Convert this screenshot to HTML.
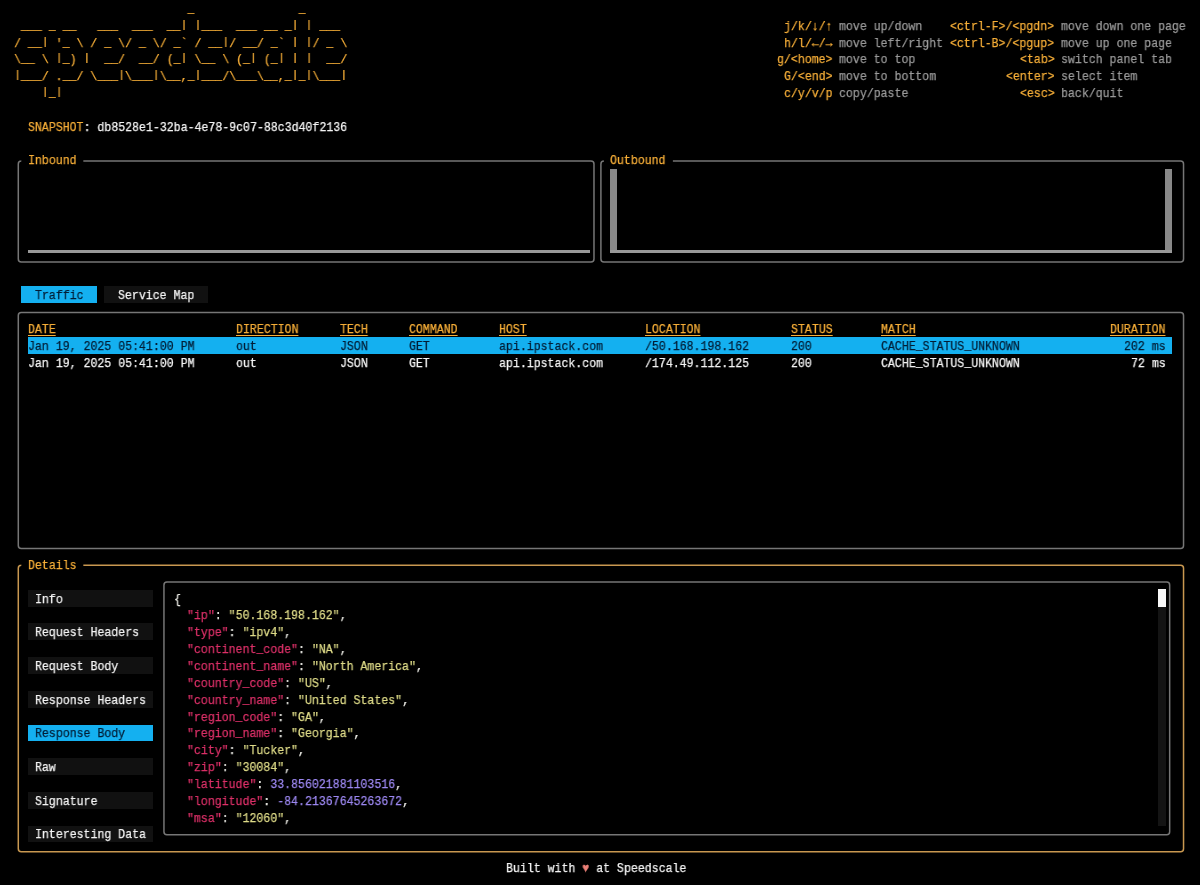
<!DOCTYPE html>
<html><head><meta charset="utf-8"><style>
html,body{margin:0;padding:0;background:#000;width:1200px;height:885px;overflow:hidden;}
.t{position:absolute;white-space:pre;font-family:"Liberation Mono",monospace;font-size:13.0px;line-height:16.85px;height:16.85px;transform-origin:0 0;transform:scaleX(0.88923);will-change:transform;-webkit-text-stroke:0.25px currentColor;}
.u{position:relative;top:-1.2px;}
.p{display:inline-block;transform-origin:0 2px;transform:scaleY(0.8);}
svg{position:absolute;left:0;top:0;}
</style></head><body>
<div class="t" style="left:13.97px;top:1.80px;"><span style="color:#f6ae38;">                         <span class="u">_</span>               <span class="u">_</span>      </span></div>
<div class="t" style="left:13.97px;top:18.65px;"><span style="color:#f6ae38;"> <span class="u">___</span> <span class="u">_</span> <span class="u">__</span>   <span class="u">___</span>  <span class="u">___</span>  <span class="u">__</span><span class="p">|</span> <span class="p">|</span><span class="u">___</span>  <span class="u">___</span> <span class="u">__</span> <span class="u">_</span><span class="p">|</span> <span class="p">|</span> <span class="u">___</span> </span></div>
<div class="t" style="left:13.97px;top:35.50px;"><span style="color:#f6ae38;">/ <span class="u">__</span><span class="p">|</span> '<span class="u">_</span> \ / <span class="u">_</span> \/ <span class="u">_</span> \/ <span class="u">_</span>` / <span class="u">__</span><span class="p">|</span>/ <span class="u">__</span>/ <span class="u">_</span>` <span class="p">|</span> <span class="p">|</span>/ <span class="u">_</span> \</span></div>
<div class="t" style="left:13.97px;top:52.35px;"><span style="color:#f6ae38;">\<span class="u">__</span> \ <span class="p">|</span><span class="u">_</span>) <span class="p">|</span>  <span class="u">__</span>/  <span class="u">__</span>/ (<span class="u">_</span><span class="p">|</span> \<span class="u">__</span> \ (<span class="u">_</span><span class="p">|</span> (<span class="u">_</span><span class="p">|</span> <span class="p">|</span> <span class="p">|</span>  <span class="u">__</span>/</span></div>
<div class="t" style="left:13.97px;top:69.20px;"><span style="color:#f6ae38;"><span class="p">|</span><span class="u">___</span>/ .<span class="u">__</span>/ \<span class="u">___</span><span class="p">|</span>\<span class="u">___</span><span class="p">|</span>\<span class="u">__</span>,<span class="u">_</span><span class="p">|</span><span class="u">___</span>/\<span class="u">___</span>\<span class="u">__</span>,<span class="u">_</span><span class="p">|</span><span class="u">_</span><span class="p">|</span>\<span class="u">___</span><span class="p">|</span></span></div>
<div class="t" style="left:13.97px;top:86.05px;"><span style="color:#f6ae38;">    <span class="p">|</span><span class="u">_</span><span class="p">|</span></span></div>
<div class="t" style="left:783.87px;top:18.65px;"><span style="color:#f6ae38;">j/k/↓/↑</span></div>
<div class="t" style="left:839.36px;top:18.65px;"><span style="color:#9a9a9a;">move up/down</span></div>
<div class="t" style="left:783.87px;top:35.50px;"><span style="color:#f6ae38;">h/l/←/→</span></div>
<div class="t" style="left:839.36px;top:35.50px;"><span style="color:#9a9a9a;">move left/right</span></div>
<div class="t" style="left:776.93px;top:52.35px;"><span style="color:#f6ae38;">g/&lt;home&gt;</span></div>
<div class="t" style="left:839.36px;top:52.35px;"><span style="color:#9a9a9a;">move to top</span></div>
<div class="t" style="left:783.87px;top:69.20px;"><span style="color:#f6ae38;">G/&lt;end&gt;</span></div>
<div class="t" style="left:839.36px;top:69.20px;"><span style="color:#9a9a9a;">move to bottom</span></div>
<div class="t" style="left:783.87px;top:86.05px;"><span style="color:#f6ae38;">c/y/v/p</span></div>
<div class="t" style="left:839.36px;top:86.05px;"><span style="color:#9a9a9a;">copy/paste</span></div>
<div class="t" style="left:950.33px;top:18.65px;"><span style="color:#f6ae38;">&lt;ctrl-F&gt;/&lt;pgdn&gt;</span></div>
<div class="t" style="left:1061.31px;top:18.65px;"><span style="color:#9a9a9a;">move down one page</span></div>
<div class="t" style="left:950.33px;top:35.50px;"><span style="color:#f6ae38;">&lt;ctrl-B&gt;/&lt;pgup&gt;</span></div>
<div class="t" style="left:1061.31px;top:35.50px;"><span style="color:#9a9a9a;">move up one page</span></div>
<div class="t" style="left:1019.69px;top:52.35px;"><span style="color:#f6ae38;">&lt;tab&gt;</span></div>
<div class="t" style="left:1061.31px;top:52.35px;"><span style="color:#9a9a9a;">switch panel tab</span></div>
<div class="t" style="left:1005.82px;top:69.20px;"><span style="color:#f6ae38;">&lt;enter&gt;</span></div>
<div class="t" style="left:1061.31px;top:69.20px;"><span style="color:#9a9a9a;">select item</span></div>
<div class="t" style="left:1019.69px;top:86.05px;"><span style="color:#f6ae38;">&lt;esc&gt;</span></div>
<div class="t" style="left:1061.31px;top:86.05px;"><span style="color:#9a9a9a;">back/quit</span></div>
<div class="t" style="left:27.84px;top:119.75px;"><span style="color:#f6ae38;">SNAPSHOT</span><span style="color:#f4f4f4;">: db8528e1-32ba-4e78-9c07-88c3d40f2136</span></div>
<div class="t" style="left:27.84px;top:153.45px;"><span style="color:#f6ae38;">Inbound</span></div>
<div style="position:absolute;left:27.84px;top:250.45px;width:561.82px;height:2.10px;background:#999;"></div>
<div class="t" style="left:610.47px;top:153.45px;"><span style="color:#f6ae38;">Outbound</span></div>
<div style="position:absolute;left:610.47px;top:168.50px;width:6.94px;height:84.25px;background:#888888;"></div>
<div style="position:absolute;left:1165.35px;top:168.50px;width:6.94px;height:84.25px;background:#888888;"></div>
<div style="position:absolute;left:610.47px;top:250.45px;width:561.82px;height:2.10px;background:#999;"></div>
<div style="position:absolute;left:20.91px;top:286.45px;width:76.30px;height:16.85px;background:#14b0f0;"></div>
<div class="t" style="left:34.78px;top:288.25px;"><span style="color:#031d35;">Traffic</span></div>
<div style="position:absolute;left:104.14px;top:286.45px;width:104.04px;height:16.85px;background:#111111;"></div>
<div class="t" style="left:118.01px;top:288.25px;"><span style="color:#f4f4f4;">Service Map</span></div>
<div class="t" style="left:27.84px;top:321.95px;"><span style="color:#f6ae38;text-decoration:underline;text-underline-offset:2px;">DATE</span></div>
<div class="t" style="left:235.92px;top:321.95px;"><span style="color:#f6ae38;text-decoration:underline;text-underline-offset:2px;">DIRECTION</span></div>
<div class="t" style="left:339.96px;top:321.95px;"><span style="color:#f6ae38;text-decoration:underline;text-underline-offset:2px;">TECH</span></div>
<div class="t" style="left:409.32px;top:321.95px;"><span style="color:#f6ae38;text-decoration:underline;text-underline-offset:2px;">COMMAND</span></div>
<div class="t" style="left:499.49px;top:321.95px;"><span style="color:#f6ae38;text-decoration:underline;text-underline-offset:2px;">HOST</span></div>
<div class="t" style="left:645.15px;top:321.95px;"><span style="color:#f6ae38;text-decoration:underline;text-underline-offset:2px;">LOCATION</span></div>
<div class="t" style="left:790.80px;top:321.95px;"><span style="color:#f6ae38;text-decoration:underline;text-underline-offset:2px;">STATUS</span></div>
<div class="t" style="left:880.97px;top:321.95px;"><span style="color:#f6ae38;text-decoration:underline;text-underline-offset:2px;">MATCH</span></div>
<div class="t" style="left:1109.86px;top:321.95px;"><span style="color:#f6ae38;text-decoration:underline;text-underline-offset:2px;">DURATION</span></div>
<div style="position:absolute;left:27.84px;top:337.00px;width:1144.44px;height:16.85px;background:#14b0f0;"></div>
<div class="t" style="left:27.84px;top:338.80px;"><span style="color:#031d35;">Jan 19, 2025 05:41:00 PM</span></div>
<div class="t" style="left:235.92px;top:338.80px;"><span style="color:#031d35;">out</span></div>
<div class="t" style="left:339.96px;top:338.80px;"><span style="color:#031d35;">JSON</span></div>
<div class="t" style="left:409.32px;top:338.80px;"><span style="color:#031d35;">GET</span></div>
<div class="t" style="left:499.49px;top:338.80px;"><span style="color:#031d35;">api.ipstack.com</span></div>
<div class="t" style="left:645.15px;top:338.80px;"><span style="color:#031d35;">/50.168.198.162</span></div>
<div class="t" style="left:790.80px;top:338.80px;"><span style="color:#031d35;">200</span></div>
<div class="t" style="left:880.97px;top:338.80px;"><span style="color:#031d35;">CACHE<span class="u">_</span>STATUS<span class="u">_</span>UNKNOWN</span></div>
<div class="t" style="left:1123.73px;top:338.80px;"><span style="color:#031d35;">202 ms</span></div>
<div class="t" style="left:27.84px;top:355.65px;"><span style="color:#f4f4f4;">Jan 19, 2025 05:41:00 PM</span></div>
<div class="t" style="left:235.92px;top:355.65px;"><span style="color:#f4f4f4;">out</span></div>
<div class="t" style="left:339.96px;top:355.65px;"><span style="color:#f4f4f4;">JSON</span></div>
<div class="t" style="left:409.32px;top:355.65px;"><span style="color:#f4f4f4;">GET</span></div>
<div class="t" style="left:499.49px;top:355.65px;"><span style="color:#f4f4f4;">api.ipstack.com</span></div>
<div class="t" style="left:645.15px;top:355.65px;"><span style="color:#f4f4f4;">/174.49.112.125</span></div>
<div class="t" style="left:790.80px;top:355.65px;"><span style="color:#f4f4f4;">200</span></div>
<div class="t" style="left:880.97px;top:355.65px;"><span style="color:#f4f4f4;">CACHE<span class="u">_</span>STATUS<span class="u">_</span>UNKNOWN</span></div>
<div class="t" style="left:1130.67px;top:355.65px;"><span style="color:#f4f4f4;">72 ms</span></div>
<div class="t" style="left:27.84px;top:557.85px;"><span style="color:#f6ae38;">Details</span></div>
<div style="position:absolute;left:27.84px;top:589.75px;width:124.85px;height:16.85px;background:#111111;"></div>
<div class="t" style="left:34.78px;top:591.55px;"><span style="color:#f4f4f4;">Info</span></div>
<div style="position:absolute;left:27.84px;top:623.45px;width:124.85px;height:16.85px;background:#111111;"></div>
<div class="t" style="left:34.78px;top:625.25px;"><span style="color:#f4f4f4;">Request Headers</span></div>
<div style="position:absolute;left:27.84px;top:657.15px;width:124.85px;height:16.85px;background:#111111;"></div>
<div class="t" style="left:34.78px;top:658.95px;"><span style="color:#f4f4f4;">Request Body</span></div>
<div style="position:absolute;left:27.84px;top:690.85px;width:124.85px;height:16.85px;background:#111111;"></div>
<div class="t" style="left:34.78px;top:692.65px;"><span style="color:#f4f4f4;">Response Headers</span></div>
<div style="position:absolute;left:27.84px;top:724.55px;width:124.85px;height:16.85px;background:#14b0f0;"></div>
<div class="t" style="left:34.78px;top:726.35px;"><span style="color:#031d35;">Response Body</span></div>
<div style="position:absolute;left:27.84px;top:758.25px;width:124.85px;height:16.85px;background:#111111;"></div>
<div class="t" style="left:34.78px;top:760.05px;"><span style="color:#f4f4f4;">Raw</span></div>
<div style="position:absolute;left:27.84px;top:791.95px;width:124.85px;height:16.85px;background:#111111;"></div>
<div class="t" style="left:34.78px;top:793.75px;"><span style="color:#f4f4f4;">Signature</span></div>
<div style="position:absolute;left:27.84px;top:825.65px;width:124.85px;height:16.85px;background:#111111;"></div>
<div class="t" style="left:34.78px;top:827.45px;"><span style="color:#f4f4f4;">Interesting Data</span></div>
<div style="position:absolute;left:1158.41px;top:607.40px;width:7.24px;height:218.25px;background:#141414;"></div>
<div style="position:absolute;left:1158.41px;top:589.25px;width:7.24px;height:17.45px;background:#f8f8f8;"></div>
<div class="t" style="left:173.50px;top:591.55px;"><span style="color:#f0f0ea;">{</span></div>
<div class="t" style="left:187.37px;top:608.40px;"><span style="color:#dc3068;">"ip"</span><span style="color:#f0f0ea;">: </span><span style="color:#dedb88;">"50.168.198.162"</span><span style="color:#f0f0ea;">,</span></div>
<div class="t" style="left:187.37px;top:625.25px;"><span style="color:#dc3068;">"type"</span><span style="color:#f0f0ea;">: </span><span style="color:#dedb88;">"ipv4"</span><span style="color:#f0f0ea;">,</span></div>
<div class="t" style="left:187.37px;top:642.10px;"><span style="color:#dc3068;">"continent<span class="u">_</span>code"</span><span style="color:#f0f0ea;">: </span><span style="color:#dedb88;">"NA"</span><span style="color:#f0f0ea;">,</span></div>
<div class="t" style="left:187.37px;top:658.95px;"><span style="color:#dc3068;">"continent<span class="u">_</span>name"</span><span style="color:#f0f0ea;">: </span><span style="color:#dedb88;">"North America"</span><span style="color:#f0f0ea;">,</span></div>
<div class="t" style="left:187.37px;top:675.80px;"><span style="color:#dc3068;">"country<span class="u">_</span>code"</span><span style="color:#f0f0ea;">: </span><span style="color:#dedb88;">"US"</span><span style="color:#f0f0ea;">,</span></div>
<div class="t" style="left:187.37px;top:692.65px;"><span style="color:#dc3068;">"country<span class="u">_</span>name"</span><span style="color:#f0f0ea;">: </span><span style="color:#dedb88;">"United States"</span><span style="color:#f0f0ea;">,</span></div>
<div class="t" style="left:187.37px;top:709.50px;"><span style="color:#dc3068;">"region<span class="u">_</span>code"</span><span style="color:#f0f0ea;">: </span><span style="color:#dedb88;">"GA"</span><span style="color:#f0f0ea;">,</span></div>
<div class="t" style="left:187.37px;top:726.35px;"><span style="color:#dc3068;">"region<span class="u">_</span>name"</span><span style="color:#f0f0ea;">: </span><span style="color:#dedb88;">"Georgia"</span><span style="color:#f0f0ea;">,</span></div>
<div class="t" style="left:187.37px;top:743.20px;"><span style="color:#dc3068;">"city"</span><span style="color:#f0f0ea;">: </span><span style="color:#dedb88;">"Tucker"</span><span style="color:#f0f0ea;">,</span></div>
<div class="t" style="left:187.37px;top:760.05px;"><span style="color:#dc3068;">"zip"</span><span style="color:#f0f0ea;">: </span><span style="color:#dedb88;">"30084"</span><span style="color:#f0f0ea;">,</span></div>
<div class="t" style="left:187.37px;top:776.90px;"><span style="color:#dc3068;">"latitude"</span><span style="color:#f0f0ea;">: </span><span style="color:#9d88f2;">33.856021881103516</span><span style="color:#f0f0ea;">,</span></div>
<div class="t" style="left:187.37px;top:793.75px;"><span style="color:#dc3068;">"longitude"</span><span style="color:#f0f0ea;">: </span><span style="color:#9d88f2;">-84.21367645263672</span><span style="color:#f0f0ea;">,</span></div>
<div class="t" style="left:187.37px;top:810.60px;"><span style="color:#dc3068;">"msa"</span><span style="color:#f0f0ea;">: </span><span style="color:#dedb88;">"12060"</span><span style="color:#f0f0ea;">,</span></div>
<div class="t" style="left:506.43px;top:861.15px;"><span style="color:#f4f4f4;">Built with </span><span style="color:#ec8078;">♥</span><span style="color:#f4f4f4;"> at Speedscale</span></div>

<svg width="1200" height="885" viewBox="0 0 1200 885">
<path d="M20.91,160.88 L21.29,160.88 Q18.29,160.88 18.29,163.88 L18.29,258.98 Q18.29,261.98 21.29,261.98 L590.98,261.98 Q593.98,261.98 593.98,258.98 L593.98,163.88 Q593.98,160.88 590.98,160.88 L83.33,160.88" fill="none" stroke="#767676" stroke-width="1.5"/>
<path d="M603.53,160.88 L603.91,160.88 Q600.91,160.88 600.91,163.88 L600.91,258.98 Q600.91,261.98 603.91,261.98 L1180.54,261.98 Q1183.54,261.98 1183.54,258.98 L1183.54,163.88 Q1183.54,160.88 1180.54,160.88 L672.89,160.88" fill="none" stroke="#767676" stroke-width="1.5"/>
<rect x="18.29" y="312.53" width="1165.25" height="235.90" rx="3" fill="none" stroke="#767676" stroke-width="1.5"/>
<path d="M20.91,565.27 L21.29,565.27 Q18.29,565.27 18.29,568.27 L18.29,848.73 Q18.29,851.73 21.29,851.73 L1180.54,851.73 Q1183.54,851.73 1183.54,848.73 L1183.54,568.27 Q1183.54,565.27 1180.54,565.27 L83.33,565.27" fill="none" stroke="#c99850" stroke-width="1.5"/>
<rect x="163.95" y="582.12" width="1005.72" height="252.75" rx="3" fill="none" stroke="#767676" stroke-width="1.5"/>
</svg>
</body></html>
